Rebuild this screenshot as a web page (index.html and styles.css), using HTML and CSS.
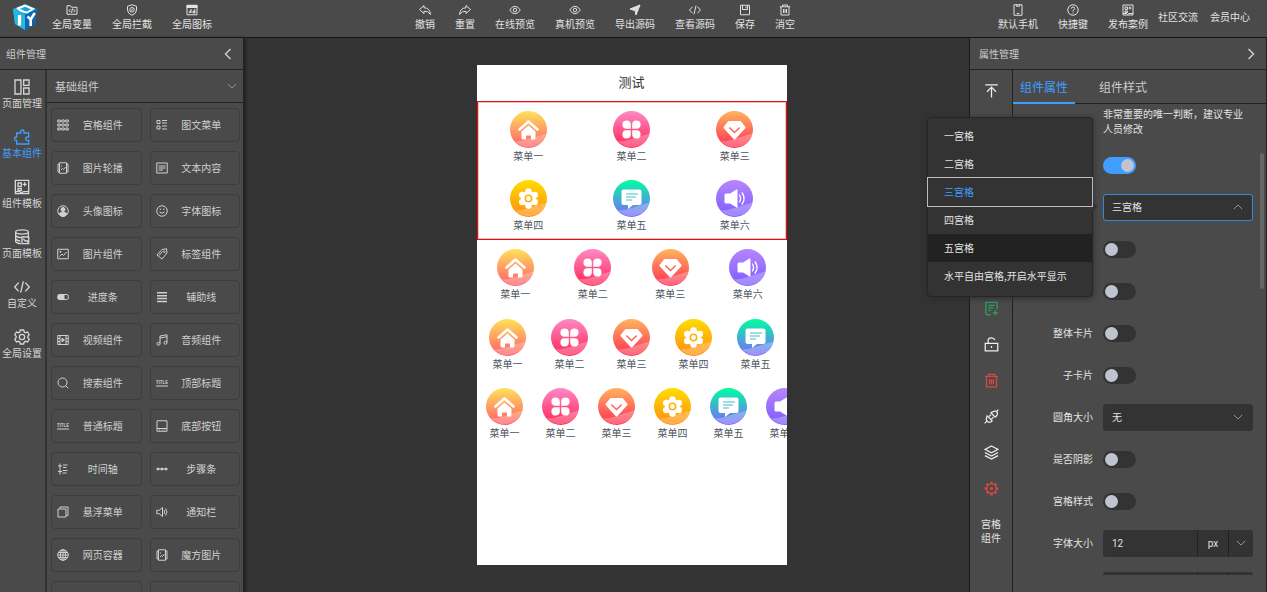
FILE: index.html
```html
<!DOCTYPE html>
<html lang="zh-CN">
<head>
<meta charset="utf-8">
<title>DIY 页面设计器</title>
<link rel="stylesheet" href="styles.css">
</head>
<body>
<svg class="sprite" aria-hidden="true">
  <defs>
    <linearGradient id="g-home" x1="0" y1="0" x2="0" y2="1"><stop offset="0" stop-color="#ffe259"/><stop offset="1" stop-color="#ff5a6b"/></linearGradient>
    <linearGradient id="g-clover" x1="0" y1="0" x2="0" y2="1"><stop offset="0" stop-color="#ff8ac6"/><stop offset="1" stop-color="#ff2454"/></linearGradient>
    <linearGradient id="g-gem" x1="0" y1="0" x2="0" y2="1"><stop offset="0" stop-color="#ffb55e"/><stop offset="1" stop-color="#ff2d55"/></linearGradient>
    <linearGradient id="g-gear" x1="0" y1="0" x2="0" y2="1"><stop offset="0" stop-color="#ffde00"/><stop offset="1" stop-color="#ff8a10"/></linearGradient>
    <linearGradient id="g-chat" x1="0" y1="0" x2="0" y2="1"><stop offset="0" stop-color="#00ffa0"/><stop offset="1" stop-color="#7f63ff"/></linearGradient>
    <linearGradient id="g-sound" x1="0" y1="0" x2="0" y2="1"><stop offset="0" stop-color="#b885ff"/><stop offset="1" stop-color="#7a5cff"/></linearGradient>
    <linearGradient id="g-cube" x1="0" y1="0" x2="1" y2="1"><stop offset="0" stop-color="#1fc4ea"/><stop offset="1" stop-color="#0870bd"/></linearGradient>
  </defs>
  <symbol id="wave" viewBox="0 0 37 37"><path d="M5 30q5 1 12-1.500t19.500-6A18.500 18.500 0 0 1 5 30z" fill="#fff" opacity=".27"/></symbol>
  <symbol id="m-home" viewBox="0 0 37 37"><circle cx="18.500" cy="18.500" r="18.500" fill="url(#g-home)"/><use href="#wave" width="37" height="37"/><path d="M9.500 18.500l9-8 9 8" fill="none" stroke="#fff" stroke-width="2.600" stroke-linecap="round" stroke-linejoin="round"/><path d="M11.500 20.500l7-6 7 6v6.500q0 1.500-1.500 1.500h-3v-4h-5v4h-3q-1.500 0-1.500-1.500z" fill="#fff"/></symbol>
  <symbol id="m-clover" viewBox="0 0 37 37"><circle cx="18.500" cy="18.500" r="18.500" fill="url(#g-clover)"/><use href="#wave" width="37" height="37"/><path d="M17.800 17.800h-4.300a4.200 4.200 0 1 1 4.300-4.300zM19.200 17.800v-4.300a4.200 4.200 0 1 1 4.300 4.300zM17.800 19.200v4.300a4.200 4.200 0 1 1-4.300-4.300zM19.200 19.200h4.300a4.200 4.200 0 1 1-4.300 4.300z" fill="#fff"/></symbol>
  <symbol id="m-gem" viewBox="0 0 37 37"><circle cx="18.500" cy="18.500" r="18.500" fill="url(#g-gem)"/><use href="#wave" width="37" height="37"/><path d="M13 11h11l4.500 5.500-10 11-10-11z" fill="#fff" stroke="#fff" stroke-width="2" stroke-linejoin="round"/><path d="M13.800 17l4.700 4.500 4.700-4.500" fill="none" stroke="#ff6257" stroke-width="1.600" stroke-linecap="round"/></symbol>
  <symbol id="m-gear" viewBox="0 0 37 37"><circle cx="18.500" cy="18.500" r="18.500" fill="url(#g-gear)"/><use href="#wave" width="37" height="37"/><g fill="#fff"><circle cx="18.500" cy="18.500" r="7.500"/><circle cx="18.500" cy="11.500" r="3.200"/><circle cx="18.500" cy="25.500" r="3.200"/><circle cx="12.200" cy="15" r="3.200"/><circle cx="24.800" cy="15" r="3.200"/><circle cx="12.200" cy="22" r="3.200"/><circle cx="24.800" cy="22" r="3.200"/></g><circle cx="18.500" cy="18.500" r="3.200" fill="none" stroke="#ffb405" stroke-width="1.600"/></symbol>
  <symbol id="m-chat" viewBox="0 0 37 37"><circle cx="18.500" cy="18.500" r="18.500" fill="url(#g-chat)"/><use href="#wave" width="37" height="37"/><path d="M10.500 9.500h16a2 2 0 0 1 2 2v11.500a2 2 0 0 1-2 2h-6.500l-5 4v-4h-4.500a2 2 0 0 1-2-2v-11.500a2 2 0 0 1 2-2z" fill="#fff"/><path d="M13 14h12M13 17h10M13 20h6" stroke="#45b9cf" stroke-width="1.200"/></symbol>
  <symbol id="m-sound" viewBox="0 0 37 37"><circle cx="18.500" cy="18.500" r="18.500" fill="url(#g-sound)"/><use href="#wave" width="37" height="37"/><path d="M10 13.500h4l6.500-4q1-.5 1 .8v16.400q0 1.300-1 .8l-6.500-4h-4q-1.500 0-1.500-1.500v-7q0-1.500 1.500-1.500z" fill="#fff"/><path d="M23.500 15q2.200 3.500 0 7M26.200 13q3.800 5.500 0 11" fill="none" stroke="#fff" stroke-width="1.400" stroke-linecap="round"/></symbol>

  <symbol id="i-logo" viewBox="0 0 26 28"><path d="M13 1l12 5-2 15-10 6-10-6L1 6z" fill="url(#g-cube)"/><path d="M1 6l12 6v15L3 21z" fill="#27b7e6"/><path d="M25 6l-12 6v15l10-6z" fill="#0b66b4"/><path d="M6 5.500l7-3 8 3.500-6 3.500q-6-1-9-4z" fill="none" stroke="#fff" stroke-width="2"/><path d="M7.500 12v10.500" stroke="#fff" stroke-width="3.200"/><path d="M15.500 13.500l3.200 3 4-6.500M18.700 16.500V23" fill="none" stroke="#fff" stroke-width="2.600"/></symbol>
  <symbol id="i-var" viewBox="0 0 24 24"><path d="M2 20.500v-17h7l2 3h11v14zM9 10l-3 3.500 3 3M15 10l3 3.500-3 3M13 9l-2 8.500"/></symbol>
  <symbol id="i-shield" viewBox="0 0 24 24"><path d="M12 1.500l9 3V12q0 7-9 10.500Q3 19 3 12V4.500z"/><circle cx="12" cy="11.500" r="4.500"/><path d="M9 14.500l6-6"/></symbol>
  <symbol id="i-ad" viewBox="0 0 24 24"><path d="M2 2.500h20v19H2z"/><path d="M2 3h20v4H2z" fill="currentColor"/><path d="M6 18l4-7v7M7 16h3M14 18v-4h3.500v4zM17.500 18v-8"/></symbol>
  <symbol id="i-undo" viewBox="0 0 24 24"><path d="M10 3L1 11l9 8v-4.500q8-1 13 6.500-1-13-13-13.500z"/></symbol>
  <symbol id="i-redo" viewBox="0 0 24 24"><path d="M14 3l9 8-9 8v-4.500q-8-1-13 6.500 1-13 13-13.500z"/></symbol>
  <symbol id="i-eye" viewBox="0 0 24 24"><path d="M1.500 12Q6 4.500 12 4.500T22.500 12Q18 19.500 12 19.500T1.500 12z"/><circle cx="12" cy="12" r="3.500"/></symbol>
  <symbol id="i-send" viewBox="0 0 24 24"><path d="M22 2L2 10l8.500 3z" fill="currentColor"/><path d="M22 2l-8 20-2-9z" fill="currentColor"/></symbol>
  <symbol id="i-code" viewBox="0 0 24 24"><path d="M7 5.500L1 12l6 6.500M17 5.500l6 6.500-6 6.500M14 3.500l-4 17"/></symbol>
  <symbol id="i-save" viewBox="0 0 24 24"><path d="M3 2.500h18v19H3zM7 3v8h10V3M14 5v3.500"/></symbol>
  <symbol id="i-trash" viewBox="0 0 24 24"><path d="M1.500 5.500h21M7 5V2h10v3M4 6v16h16V6M9 10v8M12 10v8M15 10v8"/></symbol>
  <symbol id="i-phone" viewBox="0 0 24 24"><path d="M4 1.500h16v21H4zM9 2v2.500h6V2M9.500 19h5"/></symbol>
  <symbol id="i-help" viewBox="0 0 24 24"><circle cx="12" cy="12" r="10.500"/><path d="M8.500 9.500q0-3.500 3.500-3.500t3.500 3q0 2-3.500 4v2M12 17v2"/></symbol>
  <symbol id="i-case" viewBox="0 0 24 24"><path d="M2 2h20v20H2zM6 6h5v5H6zM16 5v6M13 8h6M6 14h5v3H6zM2 19h7l2 2 3-2h8"/></symbol>
  <symbol id="i-left" viewBox="0 0 24 24"><path d="M17 2L7 12l10 10"/></symbol>
  <symbol id="i-right" viewBox="0 0 24 24"><path d="M7 2l10 10L7 22"/></symbol>
  <symbol id="i-down" viewBox="0 0 24 24"><path d="M2 7l10 10L22 7"/></symbol>
  <symbol id="i-layout" viewBox="0 0 24 24"><path d="M1.500 1.500h9v21h-9zM14.500 1.500h8v8h-8zM14.500 13.500h8v9h-8z"/></symbol>
  <symbol id="i-puzzle" viewBox="0 0 24 24"><path d="M4 6h6V4a2.500 2.500 0 0 1 5 0v2h7v6h-2a2.500 2.500 0 0 0 0 5h2v5.500H4V17H3a2.500 2.500 0 0 1 0-5h1z"/></symbol>
  <symbol id="i-db" viewBox="0 0 24 24"><ellipse cx="12" cy="4.500" rx="9.500" ry="3.200"/><path d="M2.500 5v14q2 3 8 3M21.500 5v6M2.500 10q3 3 9 3M2.500 15q3 3 7 3M12 12h10v10H12zM14 15l3 3h4v4"/></symbol>
  <symbol id="i-gear" viewBox="0 0 24 24"><path d="M9.500 1.500h5l.8 3 2 1 3-1 2.500 4-2 2.500v2l2 2.500-2.500 4-3-1-2 1-.8 3h-5l-.8-3-2-1-3 1-2.500-4 2-2.500v-2l-2-2.500 2.500-4 3 1 2-1z"/><circle cx="12" cy="12" r="4"/></symbol>
  <symbol id="i-cog" viewBox="0 0 24 24"><circle cx="12" cy="12" r="7.500"/><path d="M12 4.500V1M12 19.500V23M4.500 12H1M19.500 12H23M6.700 6.700L4.200 4.200M17.300 6.700l2.500-2.500M6.700 17.300l-2.500 2.500M17.300 17.300l2.500 2.500" stroke-width="4"/><circle cx="12" cy="12" r="1.500" fill="currentColor"/></symbol>
  <symbol id="i-grid" viewBox="0 0 24 24"><path d="M1.500 2h5v4h-5zM9.500 2h5v4h-5zM17.500 2h5v4h-5zM1.500 10h5v4h-5zM9.500 10h5v4h-5zM17.500 10h5v4h-5zM1.500 18h5v4h-5zM9.500 18h5v4h-5zM17.500 18h5v4h-5z"/></symbol>
  <symbol id="i-list" viewBox="0 0 24 24"><path d="M2 3h6v6H2zM2 14h6v6H2zM12 3h10M12 8h10M12 14h10M12 20h10"/></symbol>
  <symbol id="i-carousel" viewBox="0 0 24 24"><path d="M5 1.500h14v21H5zM5 4H2v16h3M19 4h3v16h-3M8 16l3-3 2 2 4-5M9 7v2"/></symbol>
  <symbol id="i-text" viewBox="0 0 24 24"><path d="M1.500 2h21v20h-21zM5 8h14M5 12h14M5 16h9"/></symbol>
  <symbol id="i-user" viewBox="0 0 24 24"><circle cx="12" cy="12" r="10.500"/><circle cx="12" cy="9" r="4" fill="currentColor"/><path d="M4 18q3-4 8-4t8 4q-3 5-8 5t-8-5z" fill="currentColor"/></symbol>
  <symbol id="i-smile" viewBox="0 0 24 24"><circle cx="12" cy="12" r="10.500"/><path d="M8.500 7v3M15.500 7v3M7 14q5 5 10 0"/></symbol>
  <symbol id="i-image" viewBox="0 0 24 24"><path d="M1.500 2.500h21v19h-21zM5 17l5-5 3 3 6-7M6 6.500h2v2H6z"/></symbol>
  <symbol id="i-tag" viewBox="0 0 24 24"><path d="M2 14L12 3l9-1.500L22 10 12 22zM6 15l7-8"/><circle cx="16.500" cy="7.500" r="1.500"/></symbol>
  <symbol id="i-progress" viewBox="0 0 24 24"><rect x="1.500" y="7" width="21" height="10" rx="3"/><path d="M3 8h11v8H3z" fill="currentColor"/></symbol>
  <symbol id="i-lines" viewBox="0 0 24 24"><path d="M2 3.500h20M2 9.500h20M2 15h20M2 21h20" stroke-width="3"/></symbol>
  <symbol id="i-video" viewBox="0 0 24 24"><path d="M1.500 3h21v18h-21zM6 3v18M18 3v18M2 9h4M2 15h4M18 9h4M18 15h4"/><path d="M10 8.500l5 3.500-5 3.500z" fill="currentColor"/></symbol>
  <symbol id="i-music" viewBox="0 0 24 24"><path d="M8 19V4l14-2.500V17M8 8l14-2.500"/><circle cx="5" cy="19.500" r="3"/><circle cx="19" cy="17.500" r="3"/></symbol>
  <symbol id="i-search" viewBox="0 0 24 24"><circle cx="11" cy="11" r="9"/><path d="M17.500 17.500l5 5"/></symbol>
  <symbol id="i-title" viewBox="0 0 24 24"><text x="12" y="13" class="title-glyph">TITLE</text><path d="M0 18h24"/></symbol>
  <symbol id="i-bottom" viewBox="0 0 24 24"><path d="M2 1.500h20v21H2zM2 17h20M6 20h2M11 20h2M16 20h2"/></symbol>
  <symbol id="i-time" viewBox="0 0 24 24"><path d="M6 1v22M2 6h8M2 17h8M12 4h9M12 9h7M11 15h10M11 20h8"/></symbol>
  <symbol id="i-steps" viewBox="0 0 24 24"><path d="M1 12h22"/><circle cx="4" cy="12" r="2" fill="currentColor"/><circle cx="12" cy="12" r="2" fill="currentColor"/><circle cx="20" cy="12" r="2" fill="currentColor"/></symbol>
  <symbol id="i-float" viewBox="0 0 24 24"><path d="M2 6h16v16H2zM6 5V2h16v17h-3"/></symbol>
  <symbol id="i-sound" viewBox="0 0 24 24"><path d="M1.500 8.500h5L13 3v18l-6.500-5.500h-5zM16 8q3 4 0 8M19 5q6 7 0 14"/></symbol>
  <symbol id="i-globe" viewBox="0 0 24 24"><circle cx="12" cy="12" r="10.500"/><ellipse cx="12" cy="12" rx="5" ry="10.500"/><path d="M12 1.500v21M1.500 12h21M3 7h18M3 17h18"/></symbol>
  <symbol id="i-top" viewBox="0 0 24 24"><path d="M2 3h20M12 23V7M5 14l7-7.500 7 7.500"/></symbol>
  <symbol id="i-form" viewBox="0 0 24 24"><path d="M11 22H5a2 2 0 0 1-2-2V2h18v11M7 7h10M7 11h8M7 15h4M18 15v8M14 19h8"/></symbol>
  <symbol id="i-lock" viewBox="0 0 24 24"><path d="M2 10h20v12H2zM6.500 10V6q0-4.500 5.500-4.500 4 0 5.500 3.500M12 14.500v3"/></symbol>
  <symbol id="i-plug" viewBox="0 0 24 24"><path d="M1 23l4-4M19 5l4-4M5 11l8 8q-3 4-7 1.500T5 11zM11 6l7 7q5-4 3-8t-10 1zM8 12l3-3M12 16l3-3"/></symbol>
  <symbol id="i-layers" viewBox="0 0 24 24"><path d="M12 1.500L22.500 7 12 12.500 1.500 7zM1.500 12L12 17.500 22.500 12M1.500 17L12 22.500 22.500 17"/></symbol>
</svg>

<div class="app">
  <header class="topbar">
    <div class="bar-group bar-start">
      <svg class="logo" role="img" aria-label="DIY"><use href="#i-logo"/></svg>
      <button class="action"><svg class="icon"><use href="#i-var"/></svg>全局变量</button>
      <button class="action"><svg class="icon"><use href="#i-shield"/></svg>全局拦截</button>
      <button class="action"><svg class="icon"><use href="#i-ad"/></svg>全局图标</button>
    </div>
    <div class="bar-group">
      <button class="action"><svg class="icon"><use href="#i-undo"/></svg>撤销</button>
      <button class="action"><svg class="icon"><use href="#i-redo"/></svg>重置</button>
      <button class="action"><svg class="icon"><use href="#i-eye"/></svg>在线预览</button>
      <button class="action"><svg class="icon"><use href="#i-eye"/></svg>真机预览</button>
      <button class="action"><svg class="icon"><use href="#i-send"/></svg>导出源码</button>
      <button class="action"><svg class="icon"><use href="#i-code"/></svg>查看源码</button>
      <button class="action"><svg class="icon"><use href="#i-save"/></svg>保存</button>
      <button class="action"><svg class="icon"><use href="#i-trash"/></svg>消空</button>
    </div>
    <div class="bar-group bar-end">
      <button class="action"><svg class="icon"><use href="#i-phone"/></svg>默认手机</button>
      <button class="action"><svg class="icon"><use href="#i-help"/></svg>快捷键</button>
      <button class="action"><svg class="icon"><use href="#i-case"/></svg>发布案例</button>
      <nav class="links"><a href="#community">社区交流</a><a href="#member">会员中心</a></nav>
    </div>
  </header>

  <aside class="side-left">
    <div class="panel-title">组件管理<button class="fold" aria-label="收起"><svg class="icon"><use href="#i-left"/></svg></button></div>
    <div class="panel-body">
      <nav class="side-nav">
        <button class="nav-item"><svg class="icon"><use href="#i-layout"/></svg>页面管理</button>
        <button class="nav-item active"><svg class="icon"><use href="#i-puzzle"/></svg>基本组件</button>
        <button class="nav-item"><svg class="icon"><use href="#i-case"/></svg>组件模板</button>
        <button class="nav-item"><svg class="icon"><use href="#i-db"/></svg>页面模板</button>
        <button class="nav-item"><svg class="icon"><use href="#i-code"/></svg>自定义</button>
        <button class="nav-item"><svg class="icon"><use href="#i-gear"/></svg>全局设置</button>
      </nav>
      <section class="library">
        <button class="category">基础组件<svg class="icon"><use href="#i-down"/></svg></button>
        <div class="widgets">
          <button class="widget"><svg class="icon"><use href="#i-grid"/></svg><span>宫格组件</span></button>
          <button class="widget"><svg class="icon"><use href="#i-list"/></svg><span>图文菜单</span></button>
          <button class="widget"><svg class="icon"><use href="#i-carousel"/></svg><span>图片轮播</span></button>
          <button class="widget"><svg class="icon"><use href="#i-text"/></svg><span>文本内容</span></button>
          <button class="widget"><svg class="icon"><use href="#i-user"/></svg><span>头像图标</span></button>
          <button class="widget"><svg class="icon"><use href="#i-smile"/></svg><span>字体图标</span></button>
          <button class="widget"><svg class="icon"><use href="#i-image"/></svg><span>图片组件</span></button>
          <button class="widget"><svg class="icon"><use href="#i-tag"/></svg><span>标签组件</span></button>
          <button class="widget"><svg class="icon"><use href="#i-progress"/></svg><span>进度条</span></button>
          <button class="widget"><svg class="icon"><use href="#i-lines"/></svg><span>辅助线</span></button>
          <button class="widget"><svg class="icon"><use href="#i-video"/></svg><span>视频组件</span></button>
          <button class="widget"><svg class="icon"><use href="#i-music"/></svg><span>音频组件</span></button>
          <button class="widget"><svg class="icon"><use href="#i-search"/></svg><span>搜索组件</span></button>
          <button class="widget"><svg class="icon"><use href="#i-title"/></svg><span>顶部标题</span></button>
          <button class="widget"><svg class="icon"><use href="#i-title"/></svg><span>普通标题</span></button>
          <button class="widget"><svg class="icon"><use href="#i-bottom"/></svg><span>底部按钮</span></button>
          <button class="widget"><svg class="icon"><use href="#i-time"/></svg><span>时间轴</span></button>
          <button class="widget"><svg class="icon"><use href="#i-steps"/></svg><span>步骤条</span></button>
          <button class="widget"><svg class="icon"><use href="#i-float"/></svg><span>悬浮菜单</span></button>
          <button class="widget"><svg class="icon"><use href="#i-sound"/></svg><span>通知栏</span></button>
          <button class="widget"><svg class="icon"><use href="#i-globe"/></svg><span>网页容器</span></button>
          <button class="widget"><svg class="icon"><use href="#i-carousel"/></svg><span>魔方图片</span></button>
          <button class="widget" aria-label="组件"></button>
          <button class="widget" aria-label="组件"></button>
        </div>
      </section>
    </div>
  </aside>

  <main class="canvas">
    <div class="phone">
      <h1 class="phone-title">测试</h1>
      <div class="menu-grid cols-3 selected">
        <div class="cell"><svg class="badge"><use href="#m-home"/></svg>菜单一</div>
        <div class="cell"><svg class="badge"><use href="#m-clover"/></svg>菜单二</div>
        <div class="cell"><svg class="badge"><use href="#m-gem"/></svg>菜单三</div>
        <div class="cell"><svg class="badge"><use href="#m-gear"/></svg>菜单四</div>
        <div class="cell"><svg class="badge"><use href="#m-chat"/></svg>菜单五</div>
        <div class="cell"><svg class="badge"><use href="#m-sound"/></svg>菜单六</div>
      </div>
      <div class="menu-grid cols-4">
        <div class="cell"><svg class="badge"><use href="#m-home"/></svg>菜单一</div>
        <div class="cell"><svg class="badge"><use href="#m-clover"/></svg>菜单二</div>
        <div class="cell"><svg class="badge"><use href="#m-gem"/></svg>菜单三</div>
        <div class="cell"><svg class="badge"><use href="#m-sound"/></svg>菜单六</div>
      </div>
      <div class="menu-grid cols-5">
        <div class="cell"><svg class="badge"><use href="#m-home"/></svg>菜单一</div>
        <div class="cell"><svg class="badge"><use href="#m-clover"/></svg>菜单二</div>
        <div class="cell"><svg class="badge"><use href="#m-gem"/></svg>菜单三</div>
        <div class="cell"><svg class="badge"><use href="#m-gear"/></svg>菜单四</div>
        <div class="cell"><svg class="badge"><use href="#m-chat"/></svg>菜单五</div>
      </div>
      <div class="menu-row">
        <div class="cell"><svg class="badge"><use href="#m-home"/></svg>菜单一</div>
        <div class="cell"><svg class="badge"><use href="#m-clover"/></svg>菜单二</div>
        <div class="cell"><svg class="badge"><use href="#m-gem"/></svg>菜单三</div>
        <div class="cell"><svg class="badge"><use href="#m-gear"/></svg>菜单四</div>
        <div class="cell"><svg class="badge"><use href="#m-chat"/></svg>菜单五</div>
        <div class="cell"><svg class="badge"><use href="#m-sound"/></svg>菜单六</div>
      </div>
    </div>
  </main>

  <aside class="side-right">
    <div class="panel-title">属性管理<button class="fold" aria-label="收起"><svg class="icon"><use href="#i-right"/></svg></button></div>
    <div class="panel-body">
      <div class="tools">
        <button class="tool" aria-label="置顶"><svg class="icon"><use href="#i-top"/></svg></button>
        <div class="tool-gap"></div>
        <button class="tool green" aria-label="新增"><svg class="icon"><use href="#i-form"/></svg></button>
        <button class="tool" aria-label="锁定"><svg class="icon"><use href="#i-lock"/></svg></button>
        <button class="tool red" aria-label="删除"><svg class="icon"><use href="#i-trash"/></svg></button>
        <button class="tool" aria-label="连接"><svg class="icon"><use href="#i-plug"/></svg></button>
        <button class="tool" aria-label="图层"><svg class="icon"><use href="#i-layers"/></svg></button>
        <button class="tool red" aria-label="设置"><svg class="icon"><use href="#i-cog"/></svg></button>
        <p class="tool-name">宫格<br>组件</p>
      </div>
      <section class="props">
        <div class="tabs" role="tablist">
          <button class="tab active" role="tab" aria-selected="true">组件属性</button>
          <button class="tab" role="tab" aria-selected="false">组件样式</button>
        </div>
        <form class="form">
          <p class="hint">非常重要的唯一判断，建议专业人员修改</p>
          <div class="field"><input class="switch" type="checkbox" role="switch" aria-label="开关" checked></div>
          <div class="field"><div class="select open"><select aria-label="宫格"><option>三宫格</option></select><svg class="icon"><use href="#i-down"/></svg></div></div>
          <div class="field"><input class="switch" type="checkbox" role="switch" aria-label="开关"></div>
          <div class="field"><input class="switch" type="checkbox" role="switch" aria-label="开关"></div>
          <div class="field"><label for="card">整体卡片</label><input id="card" class="switch" type="checkbox" role="switch"></div>
          <div class="field"><label for="sub">子卡片</label><input id="sub" class="switch" type="checkbox" role="switch"></div>
          <div class="field"><label for="radius">圆角大小</label><div class="select"><select id="radius"><option>无</option></select><svg class="icon"><use href="#i-down"/></svg></div></div>
          <div class="field"><label for="shadow">是否阴影</label><input id="shadow" class="switch" type="checkbox" role="switch"></div>
          <div class="field"><label for="style">宫格样式</label><input id="style" class="switch" type="checkbox" role="switch"></div>
          <div class="field"><label for="size">字体大小</label><div class="measure"><input id="size" type="text" value="12"><span class="unit">px</span><button type="button" aria-label="单位"><svg class="icon"><use href="#i-down"/></svg></button></div></div>
          <div class="field"><div class="measure"><input type="text" aria-label="数值"><span class="unit"></span><button type="button" aria-label="单位"></button></div></div>
        </form>
        <div class="scroll-thumb"></div>
      </section>
    </div>
    <ul class="popover" role="listbox" aria-label="宫格">
      <li role="option">一宫格</li>
      <li role="option">二宫格</li>
      <li role="option" aria-selected="true" class="chosen">三宫格</li>
      <li role="option">四宫格</li>
      <li role="option" class="hovered">五宫格</li>
      <li role="option">水平自由宫格,开启水平显示</li>
    </ul>
  </aside>
</div>
</body>
</html>
```

FILE: styles.css
```css
* { box-sizing: border-box; }

body {
  margin: 0;
  background: #333;
  color: #e2e2e2;
  font: 10px/14px "Noto Sans CJK SC", sans-serif;
}

button, input, select {
  margin: 0;
  padding: 0;
  border: 0;
  background: none;
  color: inherit;
  font: inherit;
}

p, h1, ul { margin: 0; padding: 0; list-style: none; }
a { color: inherit; text-decoration: none; }

.sprite { position: absolute; width: 0; height: 0; }

.icon {
  width: 12px;
  height: 12px;
  flex: none;
  fill: none;
  stroke: currentColor;
  stroke-width: 2;
}

.title-glyph {
  font: bold 9px "Liberation Sans", sans-serif;
  text-anchor: middle;
  fill: currentColor;
  stroke: none;
}

.app {
  display: grid;
  grid-template: 38px minmax(0, 1fr) / 244px minmax(0, 1fr) 298px;
  height: 100vh;
  overflow: hidden;
}

/* Top bar */
.topbar {
  grid-column: 1 / -1;
  display: flex;
  justify-content: space-between;
  background: #4a4a4a;
  border-bottom: 1px solid #151515;
}

.bar-group { display: flex; gap: 20px; }
.bar-start { padding-left: 12px; }
.bar-start .logo { margin-right: -6px; }
.bar-end { padding-right: 17px; }
.logo { width: 26px; height: 28px; margin-top: 3px; }

.action {
  display: flex;
  flex-direction: column;
  align-items: center;
  gap: 1px;
  padding-top: 4px;
  height: 32px;
  white-space: nowrap;
}

.links { display: flex; gap: 12px; margin-left: -10px; padding-top: 10px; }

/* Side panels */
.side-left, .side-right {
  display: flex;
  flex-direction: column;
  min-height: 0;
  background: #4a4a4a;
}

.side-left { border-right: 1px solid #222; box-shadow: 1px 0 3px #1a1a1a; }
.side-right { position: relative; border-left: 1px solid #1a1a1a; border-right: 1px solid #222; }

.panel-title {
  display: flex;
  align-items: center;
  justify-content: space-between;
  height: 32px;
  flex: none;
  padding: 0 9px 0 6px;
  border-bottom: 1px solid #222;
  color: #ccc;
}

.side-right .panel-title { padding-left: 9px; }
.fold { display: flex; }
.fold .icon { stroke-width: 3; }
.panel-body { display: flex; flex: 1; min-height: 0; }

.side-nav { width: 47px; flex: none; padding-top: 9px; border-right: 2px solid #333; }

.nav-item {
  display: flex;
  flex-direction: column;
  align-items: center;
  gap: 1px;
  width: 100%;
  height: 50px;
  padding-right: 1px;
  white-space: nowrap;
  color: #d6d6d6;
}

.nav-item .icon { width: 16px; height: 16px; }
.nav-item.active { color: #409eff; }

.library { flex: 1; min-width: 0; overflow: hidden; }

.category {
  display: flex;
  align-items: center;
  justify-content: space-between;
  width: 100%;
  height: 33px;
  padding: 0 6px 0 8px;
  border-bottom: 1px solid #222;
  font-size: 11px;
  color: #ccc;
}

.category .icon { width: 10px; height: 10px; color: #aaa; }

.widgets {
  display: grid;
  grid-template-columns: 1fr 1fr;
  gap: 9px 8px;
  padding: 5px 3px 0 4px;
}

.widget {
  display: flex;
  align-items: center;
  height: 34px;
  padding: 0 4px 0 5px;
  border: 1px solid #3d3d3d;
  border-radius: 4px;
  color: #d0d0d0;
}

.widget span { flex: 1; text-align: center; }

/* Canvas */
.canvas { display: flex; justify-content: center; align-items: flex-start; padding: 27px 0 0 50px; }

.phone {
  width: 310px;
  height: 500px;
  overflow: hidden;
  background: #fff;
  color: #4d5560;
}

.phone-title { height: 36px; font-size: 13px; line-height: 34px; font-weight: 400; text-align: center; color: #333; }
.menu-grid { display: grid; }
.cols-3 { grid-template-columns: repeat(3, 1fr); }
.cols-4 { grid-template-columns: repeat(4, 1fr); }
.cols-5 { grid-template-columns: repeat(5, 1fr); padding-top: 1px; }
.selected { padding-top: 1px; box-shadow: inset 0 0 0 1px #e80c0c, inset 0 0 0 2px #f9baba; }
.menu-row { display: flex; }
.menu-row .cell { width: 56px; flex: none; }

.cell {
  display: flex;
  flex-direction: column;
  align-items: center;
  padding: 9px 0 8px;
  line-height: 15px;
}

.badge { width: 37px; height: 37px; }

/* Tool column */
.tools {
  display: flex;
  flex-direction: column;
  width: 43px;
  flex: none;
  padding-top: 2px;
  border-right: 1px solid #222;
}

.tool { display: flex; align-items: center; justify-content: center; height: 36px; color: #eee; }
.tool .icon { width: 15px; height: 15px; }
.tool-gap { height: 182px; }
.green { color: #27a65a; }
.red { color: #d9483f; }
.tool-name { padding-top: 11px; text-align: center; }

/* Properties */
.props { position: relative; display: flex; flex-direction: column; flex: 1; min-width: 0; padding-bottom: 17px; }
.tabs { display: flex; gap: 17px; height: 34px; flex: none; box-shadow: inset 0 -1px #222; }
.tab { padding: 2px 7px 0; border-bottom: 2px solid transparent; font-size: 12px; color: #ccc; }
.tab.active { border-color: #409eff; color: #409eff; }

.form { flex: 1; min-height: 0; overflow: hidden; padding: 2px 13px 0 0; }
.hint { margin: 0 8px 8px 90px; line-height: 15px; }

.field {
  display: flex;
  align-items: center;
  justify-content: flex-end;
  gap: 10px;
  height: 42px;
}

.field .switch { margin-right: 117px; }

.switch {
  appearance: none;
  display: flex;
  align-items: center;
  width: 33px;
  height: 17px;
  padding: 0 2px;
  border-radius: 9px;
  background: #333;
}

.switch::before { content: ""; width: 13px; height: 13px; border-radius: 50%; background: #c0c4cf; }
.switch:checked { justify-content: flex-end; background: #409eff; }

.select, .measure { display: flex; align-items: center; width: 150px; height: 27px; border-radius: 3px; background: #333; }
.select { border: 1px solid #333; padding-right: 9px; }
.select select { appearance: none; flex: 1; padding-left: 8px; height: 100%; }
.select .icon, .measure .icon { width: 10px; height: 10px; color: #aaa; }
.select.open { border-color: #3a86d6; }
.select.open .icon { transform: rotate(180deg); }

.measure input { flex: 1; min-width: 0; height: 100%; padding-left: 9px; font-family: Roboto, sans-serif; }
.measure .unit { width: 31px; border-left: 1px solid #222; line-height: 27px; height: 27px; text-align: center; font-family: Roboto, sans-serif; }
.measure button { display: flex; align-items: center; justify-content: center; width: 25px; height: 27px; border-left: 1px solid #222; }

.scroll-thumb { position: absolute; top: 83px; right: 2px; width: 4px; height: 136px; border-radius: 2px; background: #666; }

.popover {
  position: absolute;
  top: 79px;
  left: -43px;
  width: 166px;
  padding: 4px 0 6px;
  border: 1px solid #262626;
  border-radius: 4px;
  background: #333;
  box-shadow: 0 1px 6px #2b2b2b;
}

.popover::before {
  content: "";
  position: absolute;
  top: 85px;
  right: -4px;
  width: 7px;
  height: 7px;
  background: #333;
  transform: rotate(45deg);
}

.popover li { padding-left: 16px; line-height: 28px; }
.popover .chosen { position: relative; color: #409eff; outline: 1px solid #bbb; }
.popover .hovered { background: #222; }
```
